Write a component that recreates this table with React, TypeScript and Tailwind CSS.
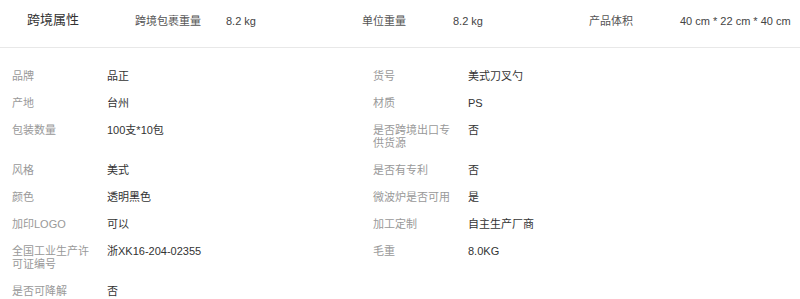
import React from "react";

const font = { fontFamily: '"Liberation Sans", Arial, "Noto Sans CJK SC", sans-serif' };

const headerItems: [string, string][] = [
  ["跨境包裹重量", "8.2 kg"],
  ["单位重量", "8.2 kg"],
  ["产品体积", "40 cm * 22 cm * 40 cm"],
];

const rows: [[string, string], [string, string] | null][] = [
  [["品牌", "品正"], ["货号", "美式刀叉勺"]],
  [["产地", "台州"], ["材质", "PS"]],
  [["包装数量", "100支*10包"], ["是否跨境出口专供货源", "否"]],
  [["风格", "美式"], ["是否有专利", "否"]],
  [["颜色", "透明黑色"], ["微波炉是否可用", "是"]],
  [["加印LOGO", "可以"], ["加工定制", "自主生产厂商"]],
  [["全国工业生产许可证编号", "浙XK16-204-02355"], ["毛重", "8.0KG"]],
  [["是否可降解", "否"], null],
];

function Cell({ item }: { item: [string, string] | null }) {
  if (!item) return <div />;
  return (
    <div className="flex py-[7px] text-[11px] leading-[13px]">
      <div className="w-[95px] shrink-0 pr-[10px] text-[#999]">{item[0]}</div>
      <div className="flex-1 text-[#333]">{item[1]}</div>
    </div>
  );
}

export default function App() {
  return (
    <div className="w-[800px] h-[299px] overflow-hidden bg-white" style={font}>
      <div className="flex h-[48px] items-start border-b border-[#e8e8e8] pt-[13px] leading-[14px]">
        <div className="w-[135px] shrink-0 pl-[27px] text-[13px] text-[#333]">跨境属性</div>
        {headerItems.map(([l, v]) => (
          <div key={l} className="flex w-[227px] shrink-0 text-[11px] pt-[1px]">
            <div className="w-[91px] shrink-0 text-[#555]">{l}</div>
            <div className="flex-1 text-[#444]">{v}</div>
          </div>
        ))}
      </div>
      <div className="grid grid-cols-[361px_1fr] px-[12px] pt-[15px]">
        {rows.map(([a, b], i) => (
          <React.Fragment key={i}>
            <Cell item={a} />
            <Cell item={b} />
          </React.Fragment>
        ))}
      </div>
    </div>
  );
}
